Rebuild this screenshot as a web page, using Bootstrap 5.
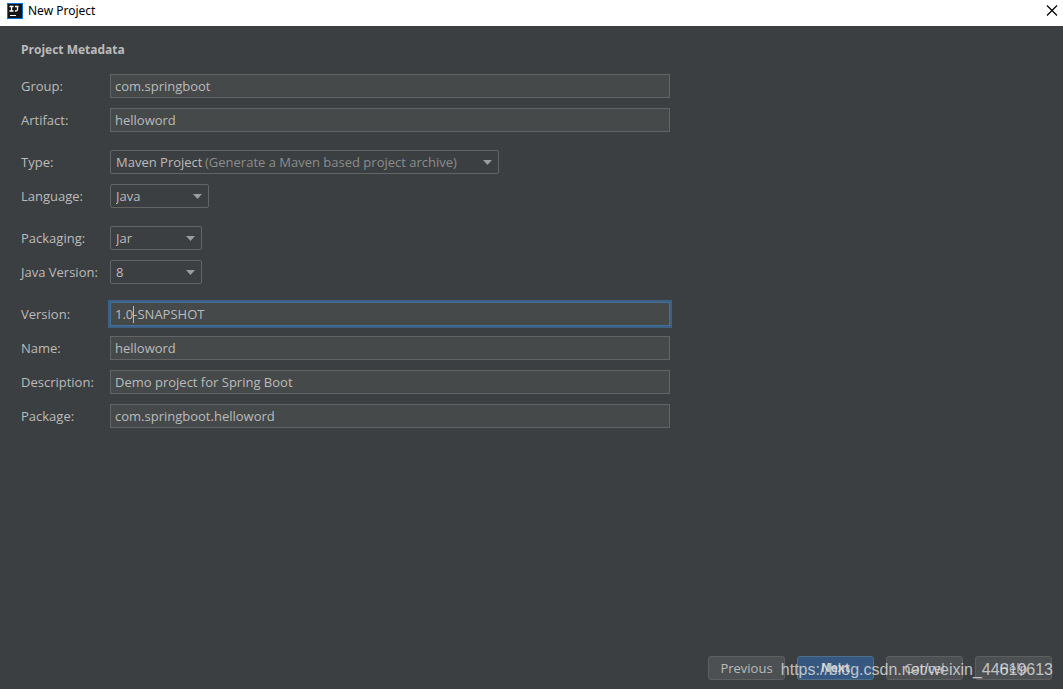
<!DOCTYPE html>
<html lang="en">
<head>
<meta charset="utf-8">
<meta name="viewport" content="width=device-width, initial-scale=1">
<title>New Project</title>
<link href="https://cdn.jsdelivr.net/npm/bootstrap@5.3.0/dist/css/bootstrap.min.css" rel="stylesheet">
<style>
body { font-family: "Open Sans", "Noto Sans", sans-serif; font-size: 13px; line-height: 18px; background: #3c3f41; color: #bbbbbb; }
.titlebar { height: 26px; background: #fff; color: #000; padding: 0 5px 4px 7px; gap: 5px; }
.titlebar h1 { font-family: "Noto Sans", sans-serif; font-size: 12px; line-height: 18px; font-weight: 400; }
.win-close { line-height: 0; color: #000; }
.pane { padding: 15px 21px 0; }
.pane h2 { font-size: 12px; line-height: 18px; font-weight: 700; margin-bottom: 15px; }
.field-group { display: grid; gap: 10px; margin-bottom: 18px; }
.field label { width: 89px; flex: none; }
.field-box { max-width: 560px; }
.form-control, .form-select { height: 24px; min-height: 24px; font-size: 13px; line-height: 18px; color: #bbbbbb; border: 1px solid #646464; }
.form-control { background: #45494a; border-radius: 0; padding: 2px 4px; }
.form-control:focus { background: #45494a; color: #bbbbbb; }
.form-control.editing, .form-control:focus { border-color: #466d94; box-shadow: 0 0 0 2px #3d6185; }
.form-select { border-radius: 2px; padding: 2px 22px 2px 5px; background: #3c3f41 url("data:image/svg+xml,%3Csvg xmlns='http://www.w3.org/2000/svg' viewBox='0 0 9 5'%3E%3Cpath d='M0 0h9L4.500 5z' fill='%239a9da0'/%3E%3C/svg%3E") no-repeat right 6px center / 9px 5px; }
.pick-type { width: 389px; }
.pick-lang { width: 99px; }
.pick-short { width: 92px; }
.type-hint { left: 95px; top: 3px; color: #8c8c8c; pointer-events: none; white-space: nowrap; }
.caret { left: 23px; top: 4px; width: 1px; height: 17px; background: #bbbbbb; }
.actions { padding: 0 11px 9px; gap: 12px; }
.actions .btn { width: 77px; height: 24px; padding: 0; font-size: 13px; line-height: 18px; border: 1px solid #5e6060; border-radius: 3px; background: #4c5052; color: #bbbbbb; }
.actions .btn.go { background: #365880; border-color: #4c708c; color: #c8c8c8; font-size: 12px; font-weight: 700; }
.watermark { right: 10px; bottom: 7px; font: 16px/24px "Liberation Sans", Arial, sans-serif; color: rgba(225,225,225,.8); pointer-events: none; white-space: nowrap; }
</style>
</head>
<body class="min-vh-100 d-flex flex-column">
<header class="titlebar d-flex align-items-center">
  <svg width="16" height="16" viewBox="0 0 16 16" aria-hidden="true">
    <path d="M0 0h16v16H0z" fill="#0b6fe0"/><path d="M1 1h14v14H1z" fill="#151515"/>
    <path d="M2.500 3.500h4M4.500 3v5M2.500 8h4M8 3.500h3.500M10.500 3v3.500q0 1.500-1.500 1.500H8" fill="none" stroke="#fff" stroke-width="1.300"/>
    <path d="M3 12h6v1H3z" fill="#fff"/>
  </svg>
  <h1 class="m-0">New Project</h1>
  <button type="button" class="win-close ms-auto border-0 bg-transparent p-0" aria-label="Close">
    <svg width="12" height="12" viewBox="0 0 12 12"><path d="M1 .500l10 10M11 .500L1 10.500" stroke="#000" stroke-width="1.200"/></svg>
  </button>
</header>
<form class="flex-grow-1 d-flex flex-column">
  <main class="pane flex-grow-1">
    <h2>Project Metadata</h2>
    <div class="field-group">
      <div class="field d-flex align-items-center"><label for="group">Group:</label><div class="field-box flex-grow-1"><input class="form-control" id="group" type="text" value="com.springboot"></div></div>
      <div class="field d-flex align-items-center"><label for="artifact">Artifact:</label><div class="field-box flex-grow-1"><input class="form-control" id="artifact" type="text" value="helloword"></div></div>
    </div>
    <div class="field-group">
      <div class="field d-flex align-items-center"><label for="type">Type:</label><div class="position-relative"><select class="form-select pick-type" id="type"><option>Maven Project</option></select><span class="type-hint position-absolute">(Generate a Maven based project archive)</span></div></div>
      <div class="field d-flex align-items-center"><label for="language">Language:</label><select class="form-select pick-lang" id="language"><option>Java</option></select></div>
    </div>
    <div class="field-group">
      <div class="field d-flex align-items-center"><label for="packaging">Packaging:</label><select class="form-select pick-short" id="packaging"><option>Jar</option></select></div>
      <div class="field d-flex align-items-center"><label for="java">Java Version:</label><select class="form-select pick-short" id="java"><option>8</option></select></div>
    </div>
    <div class="field-group">
      <div class="field d-flex align-items-center"><label for="version">Version:</label><div class="field-box flex-grow-1 position-relative"><input class="form-control editing" id="version" type="text" value="1.0-SNAPSHOT"><span class="caret position-absolute"></span></div></div>
      <div class="field d-flex align-items-center"><label for="name">Name:</label><div class="field-box flex-grow-1"><input class="form-control" id="name" type="text" value="helloword"></div></div>
      <div class="field d-flex align-items-center"><label for="description">Description:</label><div class="field-box flex-grow-1"><input class="form-control" id="description" type="text" value="Demo project for Spring Boot"></div></div>
      <div class="field d-flex align-items-center"><label for="package">Package:</label><div class="field-box flex-grow-1"><input class="form-control" id="package" type="text" value="com.springboot.helloword"></div></div>
    </div>
  </main>
  <footer class="actions d-flex justify-content-end position-relative">
    <button type="button" class="btn">Previous</button>
    <button type="button" class="btn go">Next</button>
    <button type="button" class="btn">Cancel</button>
    <button type="button" class="btn">Help</button>
    <span class="watermark position-absolute">https://blog.csdn.net/weixin_44619613</span>
  </footer>
</form>
<script src="https://cdn.jsdelivr.net/npm/bootstrap@5.3.0/dist/js/bootstrap.bundle.min.js"></script>
</body>
</html>
